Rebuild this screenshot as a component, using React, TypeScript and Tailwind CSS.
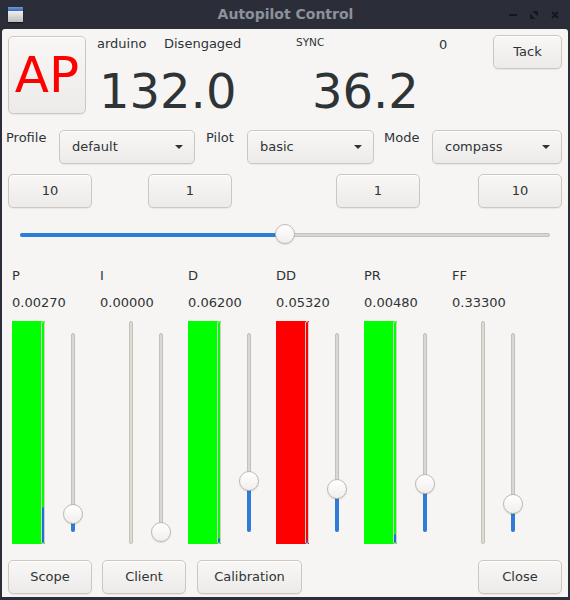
import React from "react";

const TXT = "text-[#2e3436]";

function Btn({ children, className = "" }: { children: React.ReactNode; className?: string }) {
  return (
    <div
      className={`flex items-center justify-center h-[34px] rounded-[5px] border border-[#cdc7c2] bg-linear-to-b from-[#f8f7f6] to-[#edebe9] shadow-[inset_0_1px_0_#ffffff,0_1px_1px_rgba(0,0,0,0.06)] text-[13px] ${TXT} ${className}`}
    >
      {children}
    </div>
  );
}

function Combo({ label, className }: { label: string; className: string }) {
  return (
    <div
      className={`flex items-center justify-between h-[34px] pl-[12px] pr-[11px] rounded-[5px] border border-[#cdc7c2] bg-linear-to-b from-[#f8f7f6] to-[#edebe9] shadow-[inset_0_1px_0_#ffffff,0_1px_1px_rgba(0,0,0,0.06)] text-[13px] ${TXT} ${className}`}
    >
      <span>{label}</span>
      <svg width="8" height="4" viewBox="0 0 8 4">
        <path d="M0 0H8L4 4Z" fill="#2e3436" />
      </svg>
    </div>
  );
}

function Handle({ top, left }: { top: number; left: number }) {
  return (
    <div
      className="absolute w-[20px] h-[20px] rounded-full border border-[#bfb8b1] bg-linear-to-b from-[#ffffff] to-[#f1efed] shadow-[0_1px_1px_rgba(0,0,0,0.12)]"
      style={{ top, left }}
    />
  );
}

type Col = {
  name: string;
  value: string;
  color: string;
  fill: number;
  pos: number;
};

const cols: Col[] = [
  { name: "P", value: "0.00270", color: "bg-[#00ff00]", fill: 36, pos: 181 },
  { name: "I", value: "0.00000", color: "", fill: 0, pos: 199 },
  { name: "D", value: "0.06200", color: "bg-[#00ff00]", fill: 5, pos: 148 },
  { name: "DD", value: "0.05320", color: "bg-[#ff0000]", fill: 3, pos: 156 },
  { name: "PR", value: "0.00480", color: "bg-[#00ff00]", fill: 9, pos: 151 },
  { name: "FF", value: "0.33300", color: "", fill: 0, pos: 171 },
];

function Column({ c }: { c: Col }) {
  const empty = c.color === "";
  return (
    <div className="w-[88px] flex flex-col">
      <div className="h-[16px] leading-[16px] text-[13px]">{c.name}</div>
      <div className="mt-[11px] h-[16px] leading-[16px] text-[13px]">{c.value}</div>
      <div className="mt-[10px] flex">
        <div className={`w-[33px] h-[223px] flex justify-end ${c.color}`}>
          <div
            className={`w-[4px] h-full rounded-full border flex flex-col justify-end ${
              empty ? "bg-[#dedad6] border-[#c6c0bb]" : "border-[#d3cec9]"
            }`}
          >
            {c.fill > 0 && (
              <div className="border border-[#1c71d8] rounded-[1px]" style={{ height: c.fill }} />
            )}
          </div>
        </div>
        <div className="relative ml-[18px] w-[20px] h-[223px] py-[12px] flex justify-center">
          <div className="relative w-[4px] h-[199px] rounded-full bg-[#dad6d2] border border-[#c6c0bb]">
            <div
              className="absolute left-[-1px] right-[-1px] bottom-[-1px] rounded-full bg-[#2f7bd8]"
              style={{ height: Math.max(0, 199 - c.pos) }}
            />
          </div>
          <Handle top={12 + c.pos - 10} left={0} />
        </div>
      </div>
    </div>
  );
}

export default function App() {
  return (
    <div className={`w-[570px] h-[600px] bg-[#2b2e38] flex flex-col font-['DejaVu_Sans',sans-serif] ${TXT}`}>
      {/* Title bar */}
      <div className="h-[29px] grid grid-cols-[1fr_auto_1fr] items-center">
        <div className="flex">
          <div className="ml-[8px] w-[15px] h-[15px] flex flex-col shadow-[0_1px_1px_rgba(0,0,0,0.5)]">
            <div className="h-[4px] bg-linear-to-b from-[#6b98dc] to-[#3867b8]" />
            <div className="flex-1 bg-linear-to-b from-[#f0f0f0] to-[#bcbcbc]" />
          </div>
        </div>
        <div className="text-center text-[14px] font-bold text-[#8d919b] pl-[1px]">
          Autopilot Control
        </div>
        <div className="flex items-center justify-end mr-[11px]">
          <svg width="8" height="8" viewBox="0 0 8 8" className="mr-[13px]">
            <rect x="0" y="3" width="8" height="2" fill="#15171c" />
          </svg>
          <svg width="8" height="8" viewBox="0 0 8 8" className="mr-[13px]">
            <path d="M2.5 0H8V5.5Z" fill="#15171c" />
            <path d="M0 2.5V8H5.5Z" fill="#15171c" />
          </svg>
          <svg width="8" height="8" viewBox="0 0 8 8">
            <path d="M1 1L7 7M7 1L1 7" stroke="#15171c" strokeWidth="2" />
          </svg>
        </div>
      </div>

      {/* Content */}
      <div className="flex-1 mx-[2px] mb-[3px] bg-[#f6f5f4] rounded-t-[3px] px-[6px] pt-[6px] flex flex-col">
        {/* Row 1 */}
        <div className="flex items-start">
          <div className="mt-[1px] w-[78px] h-[78px] flex items-center justify-center rounded-[5px] border border-[#cdc7c2] bg-linear-to-b from-[#f8f7f6] to-[#edebe9] shadow-[inset_0_1px_0_#ffffff,0_1px_1px_rgba(0,0,0,0.06)] text-[50px] leading-[50px] text-[#ff0000]">
            AP
          </div>
          <div className="ml-[11px] w-[396px] pt-[1px] flex flex-col">
            <div className="h-[16px] flex items-start text-[13px] leading-[16px]">
              <span className="w-[67px]">arduino</span>
              <span className="w-[132px]">Disengaged</span>
              <span className="w-[143px] text-[10.5px] leading-[13px]">SYNC</span>
              <span className="mt-[1px]">0</span>
            </div>
            <div className="mt-[15px] flex text-[48px] leading-[48px]">
              <span className="ml-[2px] w-[213px]">132.0</span>
              <span>36.2</span>
            </div>
          </div>
          <Btn className="w-[69px]">Tack</Btn>
        </div>

        {/* Row 2 */}
        <div className="mt-[15px] flex items-start text-[13px] leading-[16px]">
          <span className="-ml-[2px] w-[53px]">Profile</span>
          <Combo label="default" className="w-[136px]" />
          <span className="ml-[11px] w-[41px]">Pilot</span>
          <Combo label="basic" className="w-[127px]" />
          <span className="ml-[10px] w-[48px]">Mode</span>
          <Combo label="compass" className="w-[130px]" />
        </div>

        {/* Row 3 */}
        <div className="mt-[10px] flex">
          <Btn className="w-[84px]">10</Btn>
          <Btn className="ml-[56px] w-[84px]">1</Btn>
          <Btn className="ml-[104px] w-[84px]">1</Btn>
          <Btn className="ml-[58px] w-[84px]">10</Btn>
        </div>

        {/* Horizontal slider */}
        <div className="mt-[16px] mx-[12px] h-[21px] relative flex items-center">
          <div className="w-full h-[4px] rounded-full bg-[#dad6d2] border border-[#c6c0bb] flex">
            <div className="w-1/2 -my-[1px] -ml-[1px] rounded-full bg-[#2f7bd8]" />
          </div>
          <Handle top={0} left={255} />
        </div>

        {/* Gains */}
        <div className="mt-[23px] ml-[4px] flex">
          {cols.map((c) => (
            <Column key={c.name} c={c} />
          ))}
        </div>

        {/* Bottom buttons */}
        <div className="mt-[16px] flex">
          <Btn className="w-[84px]">Scope</Btn>
          <Btn className="ml-[10px] w-[84px]">Client</Btn>
          <Btn className="ml-[11px] w-[105px]">Calibration</Btn>
          <Btn className="ml-auto w-[84px]">Close</Btn>
        </div>
      </div>
    </div>
  );
}
